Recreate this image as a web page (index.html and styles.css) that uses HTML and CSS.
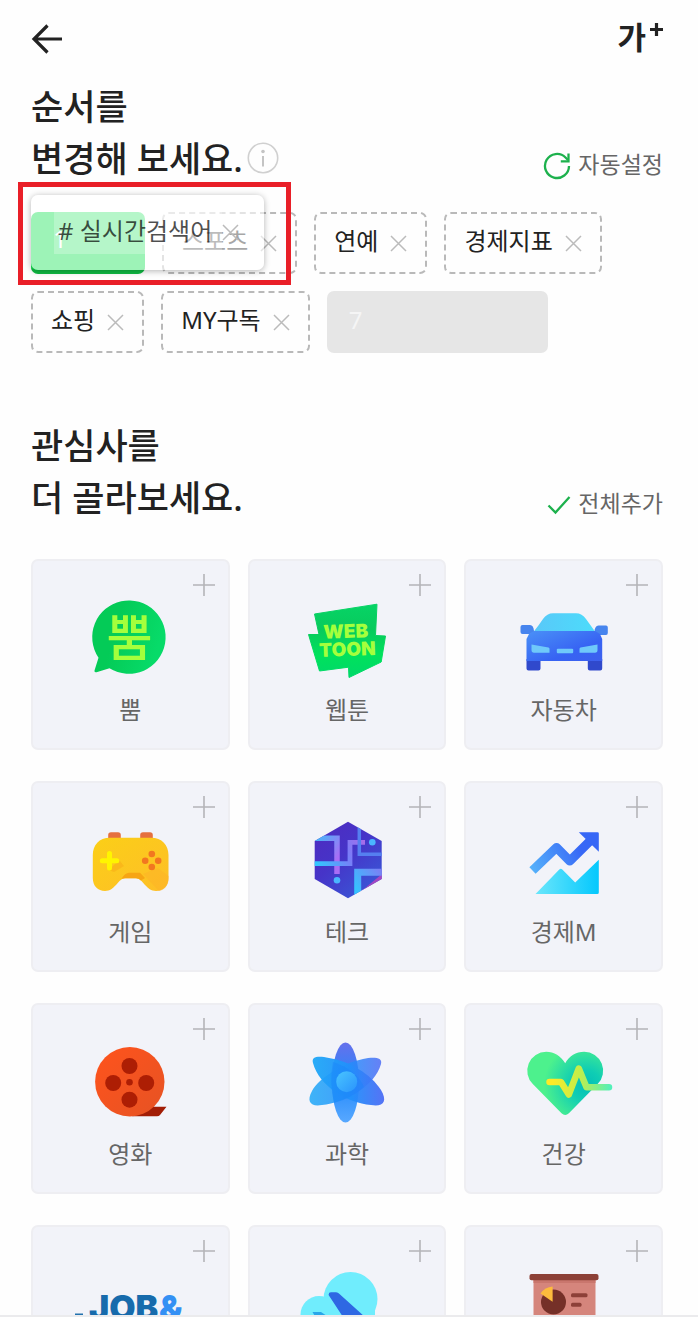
FILE: index.html
```html
<!DOCTYPE html>
<html lang="ko">
<head>
<meta charset="utf-8">
<meta name="viewport" content="width=device-width, initial-scale=1">
<title>관심사 설정</title>
<link rel="stylesheet" href="styles.css">
</head>
<body>
<svg class="defs" width="0" height="0" aria-hidden="true">
  <symbol id="close" viewBox="0 0 17 17"><path d="M1 1L16 16M16 1L1 16" fill="none" stroke="currentColor" stroke-width="1.5"/></symbol>
  <symbol id="plus" viewBox="0 0 24 24"><path d="M12 1V23M1 12H23" fill="none" stroke="currentColor" stroke-width="1.6"/></symbol>
</svg>
<div class="app">
  <main class="content">
    <header class="topbar">
      <button class="plain" type="button" aria-label="뒤로">
        <svg class="arrow" viewBox="0 0 32 32"><path d="M31 16H3.500M16.500 2.500L3 16L16.500 29.500" fill="none" stroke="#222" stroke-width="3.200"/></svg>
      </button>
      <button class="plain textsize" type="button" aria-label="글자 크게"><span>가</span><svg class="sup" viewBox="0 0 13 13"><path d="M6.500 0V13M0 6.500H13" fill="none" stroke="#222" stroke-width="3.200"/></svg></button>
    </header>

    <section>
      <div class="section-head">
        <h2>순서를<br>변경해 보세요.<button class="plain info" type="button" aria-label="안내"><svg viewBox="0 0 32 32"><circle cx="16" cy="16" r="14.700" fill="none" stroke="#d0d0d0" stroke-width="1.600"/><circle cx="16" cy="9.500" r="1.800" fill="#c4c4c4"/><path d="M16 14V24.500" stroke="#c4c4c4" stroke-width="2"/></svg></button></h2>
        <button class="plain action" type="button"><svg class="refresh" viewBox="0 0 28 28"><path d="M26 14A12 12 0 1 1 22.500 5.500L25 8" fill="none" stroke="#1db14d" stroke-width="2.300"/><path d="M25.500 1.500V9.300H17.800" fill="none" stroke="#1db14d" stroke-width="2.300"/></svg><span>자동설정</span></button>
      </div>
      <ul class="chips">
        <li class="chip target"><span>1</span>
          <div class="ghost"><span class="ghost-label"># 실시간검색어</span><svg class="x"><use href="#close"/></svg></div>
          <div class="frame"></div>
        </li>
        <li class="chip"><span>스포츠</span><button class="plain" type="button" aria-label="스포츠 삭제"><svg class="x"><use href="#close"/></svg></button></li>
        <li class="chip"><span>연예</span><button class="plain" type="button" aria-label="연예 삭제"><svg class="x"><use href="#close"/></svg></button></li>
        <li class="chip"><span>경제지표</span><button class="plain" type="button" aria-label="경제지표 삭제"><svg class="x"><use href="#close"/></svg></button></li>
        <li class="chip"><span>쇼핑</span><button class="plain" type="button" aria-label="쇼핑 삭제"><svg class="x"><use href="#close"/></svg></button></li>
        <li class="chip"><span>MY구독</span><button class="plain" type="button" aria-label="MY구독 삭제"><svg class="x"><use href="#close"/></svg></button></li>
        <li class="chip empty"><span>7</span></li>
      </ul>
    </section>

    <section class="interests">
      <div class="section-head">
        <h2>관심사를<br>더 골라보세요.</h2>
        <button class="plain action" type="button"><svg class="check" viewBox="0 0 24 20"><path d="M1.500 10.500L8.500 17.500L22.500 2" fill="none" stroke="#1db14d" stroke-width="2.300"/></svg><span>전체추가</span></button>
      </div>
      <div class="grid">
        <button class="card" type="button">
          <svg class="plus"><use href="#plus"/></svg>
          <svg class="icon" viewBox="0 0 100 90">
            <defs><linearGradient id="g1" x1="0" y1="0" x2="1" y2="0.300"><stop offset=".4" stop-color="#04cb57"/><stop offset="1" stop-color="#07db69"/></linearGradient></defs>
            <path d="M18.500 63.700L14.500 76.500Q14 78.800 16.500 78.200L29.500 74.300A36.700 36.700 0 1 0 18.500 63.700Z" fill="url(#g1)"/>
            <text class="ppum" x="49.500" y="62" text-anchor="middle" font-size="50">뿜</text>
          </svg>
          <span class="label">뿜</span>
        </button>
        <button class="card" type="button">
          <svg class="plus"><use href="#plus"/></svg>
          <svg class="icon" viewBox="0 0 100 90">
            <defs><linearGradient id="g2" x1="0" y1="0" x2="0" y2="1"><stop offset="0" stop-color="#07d466"/><stop offset=".35" stop-color="#08ca5c"/><stop offset=".7" stop-color="#00e25c"/><stop offset="1" stop-color="#00d86a"/></linearGradient></defs>
            <path d="M17.500 20L80 10.200L78.500 41.500L88.500 42L84.200 68L52 83.500L51.500 73.200L22.500 77L11.500 40.500L22 40.500Z" fill="url(#g2)" stroke="url(#g2)" stroke-width="1" stroke-linejoin="round"/>
            <g class="toon" transform="rotate(-2 50 45)"><text x="49" y="44" text-anchor="middle" font-size="19">WEB</text><text x="50" y="62" text-anchor="middle" font-size="19">TOON</text></g>
          </svg>
          <span class="label">웹툰</span>
        </button>
        <button class="card" type="button">
          <svg class="plus"><use href="#plus"/></svg>
          <svg class="icon" viewBox="0 0 100 90">
            <defs><linearGradient id="g3" x1="0" y1="0" x2="1" y2="1"><stop offset="0" stop-color="#4a91f7"/><stop offset=".65" stop-color="#3763f3"/><stop offset="1" stop-color="#3d60ee"/></linearGradient><linearGradient id="g3b"><stop offset="0" stop-color="#59c8f8"/><stop offset="1" stop-color="#4cdcfb"/></linearGradient></defs>
            <path d="M12.500 65H26.500V74.500Q26.500 76.500 24.500 76.500H14.500Q12.500 76.500 12.500 74.500ZM73.800 65H88.200V74.500Q88.200 76.500 86.200 76.500H75.800Q73.800 76.500 73.800 74.500Z" fill="#3049cc"/>
            <path d="M8.500 31H16Q19.500 31 20 37V38Q18 40 16 40H8.500Q6.500 40 6.500 38V33Q6.500 31 8.500 31ZM84.500 31.500H92Q93.800 31.500 93.800 33.500V39Q93.800 41 92 41H86L80.500 38Q80.500 32 84.500 31.500Z" fill="#4784ee"/>
            <path d="M19.800 37.500Q25 31 29 25Q33 19.300 39 19.300H62Q68 19.300 72 25L81 37.500Z" fill="url(#g3b)"/>
            <path d="M20 37H81L86 40L88.200 45V67H12.500V45L15 40Z" fill="url(#g3)"/>
            <path d="M17.500 50.500L34.500 53.500Q35.500 53.800 35.500 55V58.700H20Q17.500 58.700 17.500 56ZM83.500 50.500L66.500 53.500Q65.500 53.800 65.500 55V58.700H81Q83.500 58.700 83.500 56Z" fill="#6fc9fa"/>
            <rect x="42.800" y="54.700" width="16.400" height="4.500" rx="1" fill="#6fc9fa"/>
          </svg>
          <span class="label">자동차</span>
        </button>

        <button class="card" type="button">
          <svg class="plus"><use href="#plus"/></svg>
          <svg class="icon" viewBox="0 0 100 90">
            <defs><linearGradient id="g4" x1="0" y1="0" x2="1" y2="1"><stop offset="0" stop-color="#fbcf17"/><stop offset="1" stop-color="#febe28"/></linearGradient></defs>
            <path d="M28.200 24V19Q28.200 16.300 31 16.300H38Q40.800 16.300 40.800 19V24ZM60.200 24V19Q60.200 16.300 63 16.300H70Q72.800 16.300 72.800 19V24Z" fill="#e5703f"/>
            <path d="M30 21.700H71C82 21.700 88.500 29 88.500 39V62C88.500 70 83 75 76 75C71 75 68 72 65 69L61.500 65Q59 62.300 56 62.300H45Q42 62.300 39.500 65L36 69C33 72 30 75 25 75C18 75 12.800 70 12.800 62V39C12.800 29 19 21.700 30 21.700Z" fill="url(#g4)"/>
            <path d="M41.500 62.800Q45 56.700 49 56.700H60L65 62L61 64.500Q59 62.300 56 62.300H45Q43 62.300 41.500 62.800Z" fill="#f7a514"/>
            <path d="M78 52L88.500 60V64C88 70 84 74 79 75L63 58Z" fill="#fdb426" opacity=".6"/>
            <path d="M36 47L39 44L44 50L34 56L29 54Z" fill="#f9ae18" opacity=".6"/>
            <path d="M29.500 37.500V52M22.300 44.700H36.800" stroke="#fff500" stroke-width="5" stroke-linecap="round"/>
            <g fill="#f27720"><circle cx="71.800" cy="38" r="3.300"/><circle cx="65.200" cy="44.700" r="3.300"/><circle cx="78.200" cy="44.700" r="3.300"/><circle cx="71.800" cy="51" r="3.300"/></g>
          </svg>
          <span class="label">게임</span>
        </button>
        <button class="card" type="button">
          <svg class="plus"><use href="#plus"/></svg>
          <svg class="icon" viewBox="0 0 100 90">
            <defs>
              <linearGradient id="g5" x1="0" y1="0" x2="1" y2="1"><stop offset="0" stop-color="#5127bd"/><stop offset=".45" stop-color="#4634c8"/><stop offset="1" stop-color="#326bdf"/></linearGradient>
              <linearGradient id="g5a" gradientUnits="userSpaceOnUse" x1="18" y1="22" x2="42" y2="40"><stop offset="0" stop-color="#42bafa"/><stop offset="1" stop-color="#a96cf5"/></linearGradient>
              <linearGradient id="g5b" gradientUnits="userSpaceOnUse" x1="18" y1="48" x2="68" y2="26"><stop offset="0" stop-color="#2fc9ff"/><stop offset=".65" stop-color="#7b7cf7"/><stop offset="1" stop-color="#a86be9"/></linearGradient>
              <linearGradient id="g5c" gradientUnits="userSpaceOnUse" x1="60" y1="75" x2="85" y2="56"><stop offset="0" stop-color="#35c3ff"/><stop offset="1" stop-color="#7b80f5"/></linearGradient>
              <clipPath id="hex"><path d="M51 5.700L84.700 25V63L51 82.300L17.700 63V25Z"/></clipPath>
            </defs>
            <g clip-path="url(#hex)" fill="none">
              <path d="M0 0H100V90H0Z" fill="url(#g5)"/>
              <path d="M85 58V64L62 77Z" fill="#a447c2"/>
              <path d="M17 22.300H40V58" stroke="url(#g5a)" stroke-width="5.500"/>
              <path d="M17 47.700H53V26.300H68" stroke="url(#g5b)" stroke-width="4.800"/>
              <path d="M62.300 8V38.300H86" stroke="#557ff0" stroke-width="3.500"/>
              <path d="M60.700 82V56.300H86" stroke="url(#g5c)" stroke-width="7"/>
              <circle cx="75.300" cy="26.300" r="3.300" fill="#4ab5ff"/><circle cx="40" cy="64.300" r="3.300" fill="#4ab5ff"/>
            </g>
          </svg>
          <span class="label">테크</span>
        </button>
        <button class="card" type="button">
          <svg class="plus"><use href="#plus"/></svg>
          <svg class="icon" viewBox="0 0 100 90">
            <defs><linearGradient id="g6" gradientUnits="userSpaceOnUse" x1="15" y1="55" x2="65" y2="30"><stop offset="0" stop-color="#57b5fb"/><stop offset="1" stop-color="#3767f6"/></linearGradient><linearGradient id="g6b"><stop offset="0" stop-color="#6be6fb"/><stop offset="1" stop-color="#04c8fd"/></linearGradient></defs>
            <path d="M18.500 54.500L42.500 31.500L55.800 45L77 24" fill="none" stroke="url(#g6)" stroke-width="9" stroke-linejoin="round"/>
            <path d="M64.800 16.300H83.500Q84.800 16.300 84.800 17.600V35.700Z" fill="#3767f6"/>
            <path d="M21.500 78L45.300 53.500Q46.800 52 48.300 53.500L61.200 66.500L84.800 43.700V76.500Q84.800 78 83.300 78Z" fill="url(#g6b)"/>
          </svg>
          <span class="label">경제M</span>
        </button>

        <button class="card" type="button">
          <svg class="plus"><use href="#plus"/></svg>
          <svg class="icon" viewBox="0 0 100 90">
            <defs><linearGradient id="g7" x1="0" y1="0" x2="1" y2="1"><stop offset="0" stop-color="#ff531c"/><stop offset="1" stop-color="#e65324"/></linearGradient></defs>
            <path d="M72 68.700H86.500L80 77Q79 78.300 77 78.300H52Z" fill="#a21d06"/>
            <circle cx="49.800" cy="43.700" r="34.700" fill="url(#g7)"/>
            <g fill="#ad1e04"><circle cx="49.500" cy="28" r="8"/><circle cx="33.200" cy="45" r="8"/><circle cx="66.200" cy="45" r="8"/><circle cx="49.500" cy="61.700" r="8"/><circle cx="49.500" cy="44.300" r="3.300"/></g>
          </svg>
          <span class="label">영화</span>
        </button>
        <button class="card" type="button">
          <svg class="plus"><use href="#plus"/></svg>
          <svg class="icon" viewBox="0 0 100 90">
            <defs>
              <linearGradient id="g8a" x1="0" y1="0" x2="0" y2="1"><stop offset="0" stop-color="#6670ec"/><stop offset=".5" stop-color="#2389fb"/><stop offset="1" stop-color="#58a8ff"/></linearGradient>
              <linearGradient id="g8b"><stop offset="0" stop-color="#1fa8f7"/><stop offset=".55" stop-color="#228ffb"/><stop offset="1" stop-color="#4d6cf5"/></linearGradient>
              <linearGradient id="g8c" x1="0" y1="0" x2="1" y2="1"><stop offset="0" stop-color="#49c5ff"/><stop offset="1" stop-color="#2a93fc"/></linearGradient>
            </defs>
            <ellipse cx="48.500" cy="44.500" rx="13.500" ry="40" fill="url(#g8a)"/>
            <path d="M16 25C14 18 22 18 32 20C52 23 74 36 84 52C91 64 86 69 74 67C50 65 22 48 16 25Z" fill="url(#g8b)" opacity=".95"/>
            <path d="M84 26C86 19 76 19 66 21C46 25 22 40 15 53C9 64 14 69 25 67C48 65 78 48 84 26Z" fill="url(#g8b)" opacity=".85"/>
            <path d="M36 24Q32 44 37 65Q55 60 67 49Q60 32 36 24Z" fill="#1b83fb" opacity=".4"/>
            <circle cx="49.700" cy="43.700" r="10.500" fill="url(#g8c)"/>
          </svg>
          <span class="label">과학</span>
        </button>
        <button class="card" type="button">
          <svg class="plus"><use href="#plus"/></svg>
          <svg class="icon" viewBox="0 0 100 90">
            <defs>
              <radialGradient id="g9" gradientUnits="userSpaceOnUse" cx="72" cy="47" r="42"><stop offset="0" stop-color="#03bfb8"/><stop offset=".35" stop-color="#0fcdb4"/><stop offset="1" stop-color="#4df18d"/></radialGradient>
              <linearGradient id="g9b" gradientUnits="userSpaceOnUse" x1="32" y1="44" x2="98" y2="49"><stop offset=".1" stop-color="#fdea27"/><stop offset=".5" stop-color="#c1ee4b"/><stop offset="1" stop-color="#50f0bd"/></linearGradient>
            </defs>
            <path d="M51.200 25.300C47 18 40 13.700 32.200 13.700A19 19 0 0 0 18.800 46.100L47.500 75.300Q51.200 78.500 54.900 75.300L83.600 46.100A19 19 0 0 0 70.200 13.700C62 13.700 55 18 51.200 25.300Z" fill="url(#g9)"/>
            <path d="M35.500 44H47L54.800 56.500L64.800 30.500L72.500 49.300H95" fill="none" stroke="url(#g9b)" stroke-width="6.500" stroke-linecap="round" stroke-linejoin="round"/>
          </svg>
          <span class="label">건강</span>
        </button>

        <button class="card" type="button">
          <svg class="plus"><use href="#plus"/></svg>
          <svg class="icon" viewBox="0 0 100 90">
            <rect x="-5" y="53.500" width="8" height="5" fill="#2272ae"/>
            <g class="job" font-size="34"><text x="9" y="60" fill="#176bac">JOB</text><text x="79" y="60" fill="#3490f4">&amp;</text></g>
          </svg>
          <span class="label"></span>
        </button>
        <button class="card" type="button" aria-label="여행">
          <svg class="plus"><use href="#plus"/></svg>
          <svg class="icon" viewBox="0 0 100 90">
            <circle cx="53.500" cy="39" r="27" fill="#70edfd"/><circle cx="22" cy="54.500" r="18.500" fill="#70edfd"/><rect x="22" y="50" width="56" height="23" fill="#70edfd"/>
            <path d="M15.500 52H24L36 60H20Z" fill="#2aa6e9"/>
            <path d="M31.600 35Q31.500 32.300 34 32.300H39Q41 32.300 42.500 34L68 57H46Z" fill="#2e68e3"/>
          </svg>
          <span class="label"></span>
        </button>
        <button class="card" type="button" aria-label="비즈니스">
          <svg class="plus"><use href="#plus"/></svg>
          <svg class="icon" viewBox="0 0 100 90">
            <rect x="19.500" y="16" width="62" height="60" fill="#d5857c"/><rect x="19.500" y="19" width="62" height="4" fill="#c9766d"/>
            <rect x="15.500" y="14" width="69" height="6.300" rx="2" fill="#8c4037"/>
            <circle cx="39.500" cy="42" r="12.500" fill="#753028"/>
            <path d="M38.600 41.700L26.500 33.500Q31 27 38.600 26.500Z" fill="#fdbb3d"/>
            <rect x="57" y="33.300" width="16.500" height="4" rx="1.500" fill="#8d4038"/><rect x="57" y="42.700" width="10.500" height="4" rx="1.500" fill="#8d4038"/>
          </svg>
          <span class="label"></span>
        </button>
      </div>
    </section>
  </main>
  <footer class="bottom"></footer>
</div>
</body>
</html>
```
FILE: styles.css
```css
* { box-sizing: border-box; }

body {
  margin: 0;
  background: #fefefe;
  color: #222;
  font-family: "Noto Sans", "Noto Sans CJK KR", sans-serif;
}

.defs { position: absolute; }

.app {
  display: flex;
  flex-direction: column;
  height: 100vh;
}

.content {
  flex: 1;
  min-height: 0;
  overflow: hidden;
  padding: 0 35px 0 31px;
}

.bottom { border-top: 2px solid #ebebed; }

.plain {
  display: inline-flex;
  align-items: center;
  padding: 0;
  border: 0;
  background: none;
  color: inherit;
  font: inherit;
}

.topbar {
  display: flex;
  justify-content: space-between;
  align-items: center;
  height: 78px;
  margin-bottom: 3px;
}

.arrow { width: 32px; height: 32px; }

.textsize {
  gap: 4px;
  font-size: 31px;
  font-weight: 700;
  line-height: 40px;
}

.textsize span { padding-bottom: 4px; }

.sup {
  width: 13px;
  height: 13px;
  align-self: flex-start;
  margin-top: 6px;
}

.section-head {
  display: flex;
  justify-content: space-between;
  align-items: flex-end;
}

h2 {
  margin: 0;
  font-size: 35px;
  font-weight: 500;
  line-height: 52px;
}

.info {
  margin: 9px 0 0 4px;
  vertical-align: top;
}

.info svg { width: 32px; height: 32px; }

.action {
  height: 38px;
  gap: 7px;
  color: #666;
  font-size: 23px;
  line-height: 32px;
}

.action span { padding-bottom: 4px; }

.refresh { width: 28px; height: 28px; }
.check { width: 24px; height: 20px; }

.chips {
  display: flex;
  flex-wrap: wrap;
  gap: 17px;
  margin: 27px 0 0;
  padding: 0;
  list-style: none;
  font-size: 24px;
  line-height: 32px;
}

.chip {
  display: flex;
  align-items: center;
  gap: 12px;
  height: 62px;
  padding: 0 18px;
  border: 2px dashed #b9b9b9;
  border-radius: 7px;
}

.chip > span { padding-bottom: 4px; }

.x {
  display: block;
  width: 17px;
  height: 17px;
  color: #bbb;
}

.target {
  position: relative;
  width: 114px;
  padding: 0 22px;
  border: 0;
  border-bottom: 4px solid #0fbb43;
  background: #0ce04d;
  color: #fff;
}

.empty {
  width: 221px;
  padding: 0 22px;
  border: 0;
  background: #e6e6e6;
  color: #f5f5f5;
}

.ghost {
  position: absolute;
  z-index: 1;
  left: 0;
  top: -17px;
  display: flex;
  align-items: center;
  width: 233px;
  height: 75px;
  padding-left: 23px;
  border-radius: 7px;
  background: rgba(255, 255, 255, 0.6);
  box-shadow: 0 1px 6px rgba(0, 0, 0, 0.3);
  color: rgba(0, 0, 0, 0.7);
  white-space: nowrap;
}

.ghost-label {
  padding: 0 10px 4px 4px;
  background: rgba(255, 255, 255, 0.25);
  line-height: 38px;
}

.frame {
  position: absolute;
  z-index: 2;
  left: -13px;
  top: -30px;
  width: 273px;
  height: 103px;
  border: 5px solid #e91f28;
}

.interests { margin-top: 67px; }

.grid {
  display: grid;
  grid-template-columns: repeat(3, 1fr);
  gap: 31px 18px;
  margin-top: 35px;
}

.card {
  position: relative;
  display: flex;
  flex-direction: column;
  align-items: center;
  gap: 10px;
  padding: 33px 0 22px;
  border: 2px solid #eeeef2;
  border-radius: 7px;
  background: #f2f3f9;
  color: #666;
  font-family: inherit;
  font-size: 24px;
}

.plus {
  position: absolute;
  top: 12px;
  right: 12px;
  width: 24px;
  height: 24px;
  color: #b4b4b8;
}

.icon {
  width: 100px;
  height: 90px;
  overflow: visible;
}

.label {
  min-height: 32px;
  line-height: 32px;
}

.ppum {
  font-weight: 500;
  fill: #a5ff3c;
}

.toon, .job {
  font-family: Inter, sans-serif;
  font-weight: 900;
}

.toon { fill: #a5ff3c; }
```
